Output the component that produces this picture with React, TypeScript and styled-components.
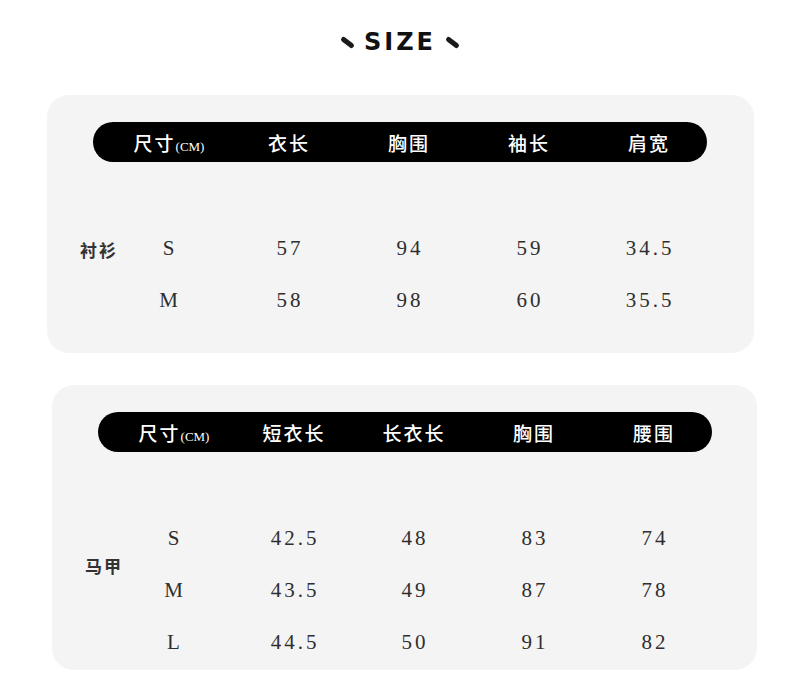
import React, { FC, ReactElement } from 'react';
import styled, { createGlobalStyle } from 'styled-components';

type Table = {
    label: string;
    labelSpan: number;
    heads: string[];
    rows: string[][];
    left: number;
    width: number;
    bottom: number;
};

const tables: Table[] = [
    {
        label: '衬衫',
        labelSpan: 1,
        heads: ['衣长', '胸围', '袖长', '肩宽'],
        rows: [
            ['S', '57', '94', '59', '34.5'],
            ['M', '58', '98', '60', '35.5'],
        ],
        left: 47,
        width: 707,
        bottom: 27,
    },
    {
        label: '马甲',
        labelSpan: 2,
        heads: ['短衣长', '长衣长', '胸围', '腰围'],
        rows: [
            ['S', '42.5', '48', '83', '74'],
            ['M', '43.5', '49', '87', '78'],
            ['L', '44.5', '50', '91', '82'],
        ],
        left: 52,
        width: 705,
        bottom: 2,
    },
];

const App: FC = (): ReactElement => {
    return (
        <Page>
            <GlobalStyle />
            <Title>
                <Slash />
                SIZE
                <Slash />
            </Title>
            {
                tables.map( ( t ) => (
                    <Card key={ t.label } left={ t.left } w={ t.width } bottom={ t.bottom }>
                        <HeadBar>
                            <HeadCell>
                                尺寸<Unit>(CM)</Unit>
                            </HeadCell>
                            { t.heads.map( ( h ) => <HeadCell key={ h }>{ h }</HeadCell> ) }
                        </HeadBar>
                        <Body>
                            <Label span={ t.labelSpan }>{ t.label }</Label>
                            {
                                t.rows.map( ( r, ri ) =>
                                    r.map( ( v, ci ) => (
                                        <Cell key={ `${ ri }-${ ci }` } row={ ri + 1 } col={ ci + 2 }>
                                            { v }
                                        </Cell>
                                    ) )
                                )
                            }
                        </Body>
                    </Card>
                ) )
            }
        </Page>
    );
};

const GlobalStyle = createGlobalStyle`
    body {
        margin: 0;
        background: #ffffff;
        font-family: "Liberation Serif", "Noto Sans CJK SC", serif;
    }
`;

const Page = styled.div`
    width: 800px;
    height: 687px;
    padding-top: 30px;
    box-sizing: border-box;
    display: flex;
    flex-direction: column;
    gap: 32px;
`;

const Title = styled.div`
    display: flex;
    align-items: center;
    justify-content: center;
    gap: 9px;
    height: 24px;
    margin-bottom: 9px;
    font-family: "DejaVu Sans", "Liberation Sans", sans-serif;
    font-weight: 900;
    font-size: 24px;
    letter-spacing: 3px;
    color: #111;
`;

const Slash = styled.span`
    display: inline-block;
    width: 15px;
    height: 5px;
    border-radius: 3px;
    background: #1a1a1a;
    transform: rotate(38deg);
`;

const Card = styled.div<{ left: number; w: number; bottom: number }>`
    margin-left: ${ ( p ) => p.left }px;
    width: ${ ( p ) => p.w }px;
    box-sizing: border-box;
    background: #f4f4f4;
    border-radius: 22px;
    padding: 27px 0 ${ ( p ) => p.bottom }px 0;
`;

const HeadBar = styled.div`
    margin-left: 46px;
    width: 614px;
    height: 40px;
    box-sizing: border-box;
    background: #000;
    border-radius: 20px;
    padding-left: 16px;
    display: grid;
    grid-template-columns: repeat(5, 120px);
    align-items: center;
`;

const HeadCell = styled.div`
    text-align: center;
    color: #fff;
    font-family: "Noto Sans CJK SC", sans-serif;
    font-size: 19px;
    font-weight: 500;
    letter-spacing: 2px;
    white-space: nowrap;
`;

const Unit = styled.span`
    font-family: "Liberation Serif", serif;
    font-size: 13px;
    letter-spacing: 0;
`;

const Body = styled.div`
    margin-top: 60px;
    padding-left: 33px;
    display: grid;
    grid-template-columns: 30px repeat(5, 120px);
    grid-auto-rows: 52px;
    align-items: center;
`;

const Label = styled.div<{ span: number }>`
    grid-column: 1;
    grid-row: 1 / span ${ ( p ) => p.span };
    white-space: nowrap;
    font-family: "Noto Sans CJK SC", sans-serif;
    font-size: 17px;
    font-weight: 700;
    letter-spacing: 2px;
    color: #333;
    padding-top: 3px;
`;

const Cell = styled.div<{ row: number; col: number }>`
    grid-row: ${ ( p ) => p.row };
    grid-column: ${ ( p ) => p.col };
    text-align: center;
    font-size: 21px;
    letter-spacing: 3px;
    color: #2e2e2e;
`;

export default App;
